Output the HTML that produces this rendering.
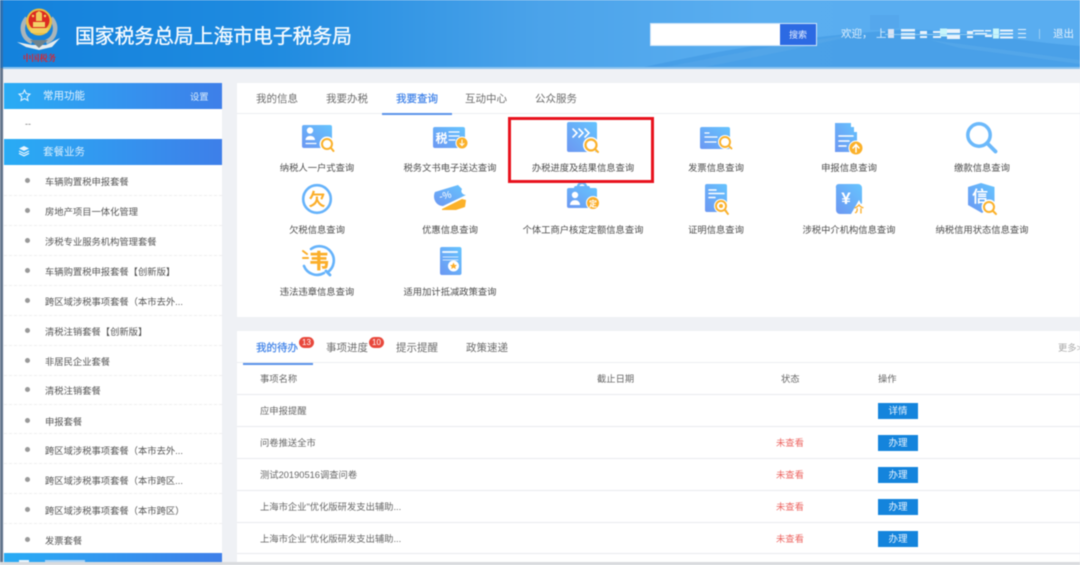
<!DOCTYPE html>
<html lang="zh"><head><meta charset="utf-8"><title>国家税务总局上海市电子税务局</title>
<style>
*{margin:0;padding:0;box-sizing:border-box}
html,body{width:1080px;height:565px;overflow:hidden;background:#eff1f5}
body{position:relative;font-family:"Liberation Sans","Noto Sans CJK SC",sans-serif;color:#666}
.a,.t{position:absolute}
.t{white-space:nowrap;line-height:14px;margin-top:1px}
.lbl{font-size:9.3px;color:#4c4c4c;transform:translateX(-50%);text-align:center;margin-top:0}
.side{font-size:9.3px;color:#555;left:45px}
.dot{position:absolute;left:25px;width:5px;height:5px;border-radius:50%;background:#999}
.sl{position:absolute;left:4px;width:218px;height:1px;border-top:1px dashed #eee}
.sh{position:absolute;left:4px;width:218px;height:26px;background:linear-gradient(90deg,#29acf5,#3e7fe9)}
.tab{font-size:10.5px;color:#6c6c6c;top:91px}
.tab2{font-size:10.5px;color:#6c6c6c;top:340px}
.rl{position:absolute;left:237px;width:843px;height:1px;background:#e9ebee}
.c{font-size:9.3px;color:#666;left:260px;margin-top:0}
.st{font-size:9.3px;color:#ec6460;left:776px;margin-top:0}
.btn{position:absolute;left:878px;width:40px;height:16px;background:#1484dc;color:#e8f4ff;font-size:9.5px;line-height:17px;text-align:center}
.bd{position:absolute;width:15px;height:11px;border-radius:6px;background:#e8483c;color:#fff;font-size:8px;line-height:11px;text-align:center}
svg{position:absolute;overflow:visible}
#wrap{position:absolute;inset:0;filter:blur(.4px)}
</style></head><body><div id="wrap">

<!-- header -->
<div class="a" style="left:0;top:0;width:1080px;height:68px;background:linear-gradient(90deg,#1482dc 0%,#1f8be0 25%,#4ba3ea 50%,#5aaef0 70%,#59adf0 100%)"></div>
<svg style="left:0;top:0" width="1080" height="68" viewBox="0 0 1080 68">
<path d="M640 68C720 50 800 36 900 30C960 28 1020 42 1080 46V68Z" fill="#3f97e3" opacity=".6"/>
<path d="M870 30V15H899V28L890 30Z" fill="#4f9fe6" opacity=".45"/>
<path d="M660 68L780 45L870 32L790 50L700 68Z" fill="#8fc6f2" opacity=".12"/>
<path d="M930 40L1080 60V64L960 48Z" fill="#8fc6f2" opacity=".15"/>
</svg>
<div class="a" style="left:0;top:67px;width:1080px;height:2px;background:#8cc3ef"></div>

<!-- logo -->
<svg style="left:0;top:0" width="70" height="68" viewBox="0 0 70 68">
<path d="M27 18C20 26 22 38 32 42M51 18C58 26 56 38 46 42" fill="none" stroke="#aab5ba" stroke-width="4.500"/>
<path d="M17 42L32 45H46L60 38L52 47L39 50L26 47Z" fill="#e6ecee"/>
<path d="M30 40H48L39 48Z" fill="#6f828c"/>
<ellipse cx="39" cy="22" rx="13" ry="13.500" fill="#e9bd42"/>
<ellipse cx="39" cy="20.500" rx="10.500" ry="10" fill="#dc2a22"/>
<path d="M29 28H49L47 33H31Z" fill="#f2cf5f"/>
<path d="M33 22H45V27H33Z" fill="#f4d268"/>
<path d="M36 13L39 11L42 13V21H36Z" fill="#f0c95a"/>
<circle cx="33" cy="16" r="1.200" fill="#f8d560"/><circle cx="45" cy="16" r="1.200" fill="#f8d560"/>
<text x="39.500" y="61" text-anchor="middle" font-size="8.300" fill="#e0222a" font-family="'Noto Serif CJK SC',serif" font-weight="700">中国税务</text>
</svg>
<div class="t" style="left:75px;top:24px;font-size:19.800px;line-height:24px;color:#f6fbff;-webkit-text-stroke:.35px #f6fbff">国家税务总局上海市电子税务局</div>

<!-- search -->
<div class="a" style="left:650px;top:23px;width:167px;height:23px;background:#fff;border:1px solid #cfe4f8"></div>
<div class="a" style="left:780px;top:24px;width:36px;height:21px;background:#2c6ae3;color:#e6efff;font-size:9px;line-height:23px;text-align:center">搜索</div>
<div class="t" style="left:841px;top:26px;font-size:10.500px;color:#dceefd">欢迎，</div>
<div class="t" style="left:876px;top:26px;font-size:10.500px;color:#dceefd">上</div>
<svg style="left:0;top:0" width="1080" height="68" viewBox="0 0 1080 68">
<g fill="#e9f3fc">
<rect x="888" y="29" width="6" height="9" fill="#d9e3f3"/>
<rect x="901" y="29" width="14" height="2.500"/><rect x="901" y="33" width="14" height="2.500"/><rect x="901" y="36.500" width="14" height="2.500"/>
<rect x="920" y="31" width="7" height="3"/><rect x="920" y="36" width="7" height="2"/>
<rect x="933" y="31" width="8" height="2"/><rect x="933" y="36" width="8" height="2"/>
<rect x="940" y="28.500" width="7" height="8" fill="#c6f5fa"/><rect x="947" y="29" width="13" height="4"/><rect x="947" y="35" width="13" height="4"/>
<rect x="967" y="31" width="6" height="3"/><rect x="967" y="36" width="6" height="2"/>
<rect x="973" y="30" width="11" height="1.500"/><rect x="975" y="33" width="12" height="1.500"/>
<rect x="985" y="30" width="6" height="1.500"/><rect x="985" y="35" width="7" height="2"/>
<rect x="993" y="28.500" width="6" height="10" fill="#c6f5fa"/>
<rect x="1000" y="29.500" width="13" height="2"/><rect x="1000" y="33" width="13" height="1.500"/><rect x="1000" y="36.500" width="13" height="2"/>
<rect x="1018" y="29" width="8" height="1"/><rect x="1018" y="33" width="8" height="1"/><rect x="1018" y="37" width="8" height="1"/>
</g>
<rect x="885" y="34" width="125" height="1" fill="#a9daf8" opacity=".7"/>
</svg>
<div class="a" style="left:1039px;top:29px;width:1px;height:10px;background:#9ccdf3"></div>
<div class="t" style="left:1053px;top:26px;font-size:10.500px;color:#e3f1fd">退出</div>

<!-- left strip -->
<div class="a" style="left:0;top:0;width:3px;height:565px;background:#62758c"></div>
<div class="a" style="left:0;top:0;width:3px;height:68px;background:#2f6fae"></div>

<!-- sidebar -->
<div class="a" style="left:4px;top:83px;width:218px;height:482px;background:#fff"></div>
<div class="sh" style="top:83px"></div>
<svg style="left:18px;top:89px" width="13" height="13" viewBox="0 0 13 13"><path d="M6.500 1L8.200 4.600L12 5.100L9.200 7.700L10 11.500L6.500 9.600L3 11.500L3.800 7.700L1 5.100L4.800 4.600Z" fill="none" stroke="#e8f5fe" stroke-width="1"/></svg>
<div class="t" style="left:43px;top:88px;font-size:10.500px;color:#e0f1fd">常用功能</div>
<div class="t" style="left:190px;top:89px;font-size:9.300px;color:#dceefc">设置</div>
<div class="t" style="left:25px;top:116px;font-size:9px;color:#777">--</div>
<div class="sh" style="top:139px"></div>
<svg style="left:18px;top:145px" width="12" height="12" viewBox="0 0 12 12"><path d="M6 1L11 3.500L6 6L1 3.500Z" fill="#e8f5fe"/><path d="M1 6L6 8.500L11 6M1 8.300L6 10.800L11 8.300" fill="none" stroke="#e8f5fe" stroke-width="1.200"/></svg>
<div class="t" style="left:43px;top:144px;font-size:10.500px;color:#dceffc">套餐业务</div>

<span class="dot" style="top:178px"></span><div class="t side" style="top:174px">车辆购置税申报套餐</div><div class="sl" style="top:195px"></div>
<span class="dot" style="top:208px"></span><div class="t side" style="top:204px">房地产项目一体化管理</div><div class="sl" style="top:225px"></div>
<span class="dot" style="top:238px"></span><div class="t side" style="top:234px">涉税专业服务机构管理套餐</div><div class="sl" style="top:255px"></div>
<span class="dot" style="top:268px"></span><div class="t side" style="top:264px">车辆购置税申报套餐【创新版】</div><div class="sl" style="top:285px"></div>
<span class="dot" style="top:298px"></span><div class="t side" style="top:294px">跨区域涉税事项套餐（本市去外...</div><div class="sl" style="top:315px"></div>
<span class="dot" style="top:328px"></span><div class="t side" style="top:324px">清税注销套餐【创新版】</div><div class="sl" style="top:345px"></div>
<span class="dot" style="top:358px"></span><div class="t side" style="top:354px">非居民企业套餐</div><div class="sl" style="top:375px"></div>
<span class="dot" style="top:387px"></span><div class="t side" style="top:383px">清税注销套餐</div><div class="sl" style="top:404px"></div>
<span class="dot" style="top:418px"></span><div class="t side" style="top:414px">申报套餐</div><div class="sl" style="top:433px"></div>
<span class="dot" style="top:447px"></span><div class="t side" style="top:443px">跨区域涉税事项套餐（本市去外...</div><div class="sl" style="top:463px"></div>
<span class="dot" style="top:477px"></span><div class="t side" style="top:473px">跨区域涉税事项套餐（本市跨区...</div><div class="sl" style="top:493px"></div>
<span class="dot" style="top:507px"></span><div class="t side" style="top:503px">跨区域涉税事项套餐（本市跨区）</div><div class="sl" style="top:523px"></div>
<span class="dot" style="top:537px"></span><div class="t side" style="top:533px">发票套餐</div>
<div class="sh" style="top:553px;height:12px"></div>
<div class="a" style="left:19px;top:560px;width:10px;height:2px;background:#e8f5fe"></div>
<div class="a" style="left:45px;top:560px;width:40px;height:2px;background:#a9d3f6"></div>

<!-- main panel 1 -->
<div class="a" style="left:237px;top:83px;width:843px;height:234px;background:#fff"></div>
<div class="a" style="left:237px;top:113px;width:843px;height:1px;background:#eceef1"></div>
<div class="a" style="left:382px;top:113px;width:70px;height:2px;background:#5b93ea"></div>
<div class="t tab" style="left:256px">我的信息</div>
<div class="t tab" style="left:326px">我要办税</div>
<div class="t tab" style="left:396px;color:#3f82e8;-webkit-text-stroke:.2px #3f82e8">我要查询</div>
<div class="t tab" style="left:465px">互动中心</div>
<div class="t tab" style="left:535px">公众服务</div>

<svg style="left:0;top:0" width="1080" height="565" viewBox="0 0 1080 565">
<defs>
<linearGradient id="g" x1="1" y1="0" x2="0" y2="1"><stop offset="0" stop-color="#66c4fe"/><stop offset="1" stop-color="#6c97f2"/></linearGradient>
</defs>
<g fill="none" stroke-linecap="round">
<!-- 1 taxpayer -->
<rect x="302" y="125" width="30" height="23" rx="2" fill="url(#g)"/>
<circle cx="310" cy="130.500" r="3.200" fill="#fff"/><path d="M305.500 140C305.500 134.500 315 134.500 315 140Z" fill="#fff"/>
<path d="M306 143.500H316" stroke="#fff" stroke-width="1.200"/>
<circle cx="327" cy="144" r="7.500" fill="#fff"/><circle cx="327" cy="144" r="5" stroke="#fbb12a" stroke-width="2"/><path d="M331 148L333.500 151" stroke="#fbb12a" stroke-width="2"/>
<!-- 2 tax doc -->
<rect x="433" y="127" width="32" height="21" rx="2" fill="url(#g)"/>
<text x="435.500" y="142.500" font-size="12" font-weight="700" fill="#fff" stroke="none">税</text>
<path d="M449 132H459M449 136H459M449 140H455" stroke="#fff" stroke-width="1.200"/>
<circle cx="462" cy="143" r="6" fill="#fbb12a" stroke="#fff"/><path d="M462 140V145M460 143.500L462 145.500L464 143.500" stroke="#fff"/>
<!-- 3 progress -->
<path d="M569 122H595A2 2 0 0 1 597 124V152H569A2 2 0 0 1 567 150V124A2 2 0 0 1 569 122Z" fill="url(#g)"/>
<path d="M573 129L577 133L573 137M579 129L583 133L579 137M585 129L589 133L585 137" stroke="#fff" stroke-width="1.600"/>
<circle cx="591" cy="145" r="8" fill="#fff"/><circle cx="591" cy="145" r="5.500" stroke="#fbb12a" stroke-width="2.200"/><path d="M595 149L598 152" stroke="#fbb12a" stroke-width="2"/>
<!-- 4 invoice -->
<rect x="700" y="127" width="30" height="22" rx="2" fill="url(#g)"/>
<path d="M705 133H709M705 137H717M705 142H716" stroke="#fff" stroke-width="1.300"/>
<circle cx="725" cy="142" r="7" fill="#fff"/><circle cx="725" cy="142" r="5" stroke="#fbb12a" stroke-width="1.900"/><path d="M729 146L731.500 148.500" stroke="#fbb12a" stroke-width="1.900"/>
<!-- 5 declare -->
<path d="M835 123H851V127H854V132H857V152H835Z" fill="url(#g)"/>
<path d="M839 136H853M839 141H849M839 146H846" stroke="#fff" stroke-width="1.600"/>
<circle cx="856" cy="148" r="7" fill="#fbb12a" stroke="#fff"/><path d="M856 152V145M853 148L856 144.500L859 148" stroke="#fff" stroke-width="1.500"/>
<!-- 6 payment -->
<circle cx="979" cy="135" r="11.200" stroke="#6cb9fb" stroke-width="3.500"/><path d="M988 144L995.500 151.500" stroke="#6cb9fb" stroke-width="3.800"/>
<!-- 7 owed -->
<circle cx="317" cy="199" r="13.800" stroke="#66b3fb" stroke-width="2.600"/>
<text x="317" y="205.500" text-anchor="middle" font-size="17" font-weight="700" fill="#fbae2a" stroke="none">欠</text>
<!-- 8 coupon -->
<path d="M435 192L458 185L462 189C460 192 463 195 466 195L443 206C436 206 432 198 435 192Z" fill="url(#g)"/>
<text x="440" y="200" font-size="10" fill="#fff" stroke="none" transform="rotate(-12 440 200)">-%</text>
<path d="M442 209L462 199L466 200L465 207L456 210H442Z" fill="#fbb12a"/>
<!-- 9 self-employed -->
<path d="M578 187A4 4 0 0 1 586 187" stroke="#6cb9fb" stroke-width="2.500"/>
<rect x="567" y="188" width="30" height="20" rx="2" fill="url(#g)"/>
<rect x="574" y="186" width="16" height="4" rx="2" fill="#66b5fb"/>
<circle cx="575" cy="195" r="3.200" fill="#fff"/><path d="M570 205C570 198.500 580 198.500 580 205Z" fill="#fff"/>
<circle cx="593" cy="203" r="6.500" fill="#fbae2a" stroke="#fff"/>
<text x="593" y="206.500" text-anchor="middle" font-size="8" font-weight="700" fill="#fff" stroke="none">定</text>
<!-- 10 certify -->
<rect x="705" y="184" width="22" height="28" rx="2" fill="url(#g)"/>
<path d="M709 190H716M709 193.500H724M709 197.500H715" stroke="#fff" stroke-width="1.500"/>
<circle cx="721" cy="206" r="7" fill="#fff"/><circle cx="721" cy="206" r="5" stroke="#fbb12a" stroke-width="1.900"/><circle cx="721" cy="206" r="2" fill="#fbb12a"/><path d="M725 210L728 214" stroke="#fbb12a" stroke-width="1.900"/>
<!-- 11 agency -->
<path d="M839 184H858A4 4 0 0 1 862 188V203L853 214H840A4 4 0 0 1 836 210V188A3 3 0 0 1 839 184Z" fill="url(#g)"/>
<text x="846" y="204" text-anchor="middle" font-size="17" fill="#fff" stroke="none" font-weight="700">¥</text>
<path d="M851 214L859 200L866 214Z" fill="#fff"/>
<text x="859" y="213" text-anchor="middle" font-size="10" font-weight="700" fill="#fbae2a" stroke="none">介</text>
<!-- 12 credit -->
<path d="M981 183L994.500 187V203L982 213L968 205V187Z" fill="url(#g)"/>
<text x="980" y="202" text-anchor="middle" font-size="16" font-weight="700" fill="#fff" stroke="none">信</text>
<circle cx="989" cy="207" r="7.500" fill="#fff"/><circle cx="989" cy="207" r="5" stroke="#fbb12a" stroke-width="2"/><path d="M993 211L996 214" stroke="#fbb12a" stroke-width="2"/>
<!-- 13 violation -->
<path d="M311 249A14 14 0 0 1 328 272M304 266A14 14 0 0 0 324 273" stroke="#66b3fb" stroke-width="2.600"/>
<path d="M326 271L330 275" stroke="#66b3fb" stroke-width="2.800"/>
<text x="319" y="268" text-anchor="middle" font-size="20" fill="#fbae2a" stroke="#fbae2a" stroke-width=".5" font-weight="700">韦</text>
<path d="M303 251L307 254M303 258H308" stroke="#fbae2a" stroke-width="2"/>
<!-- 14 policy -->
<rect x="440" y="247" width="21.500" height="28" rx="2" fill="url(#g)"/>
<path d="M443 252H457" stroke="#e9f5ff" stroke-width="2"/><path d="M443 257H458M443 260H458" stroke="#cfe6fd" stroke-width=".9"/>
<circle cx="453.500" cy="266" r="5.500" fill="#fff"/><path d="M453.500 262.500L454.700 265H457L455.200 266.800L455.900 269L453.500 267.800L451.100 269L451.800 266.800L450 265H452.300Z" fill="#fbae2a"/>
</g>
</svg>

<div class="t lbl" style="left:317px;top:161px">纳税人一户式查询</div>
<div class="t lbl" style="left:450px;top:161px">税务文书电子送达查询</div>
<div class="t lbl" style="left:583px;top:161px">办税进度及结果信息查询</div>
<div class="t lbl" style="left:716px;top:161px">发票信息查询</div>
<div class="t lbl" style="left:849px;top:161px">申报信息查询</div>
<div class="t lbl" style="left:982px;top:161px">缴款信息查询</div>
<div class="t lbl" style="left:317px;top:223px">欠税信息查询</div>
<div class="t lbl" style="left:450px;top:223px">优惠信息查询</div>
<div class="t lbl" style="left:583px;top:223px">个体工商户核定定额信息查询</div>
<div class="t lbl" style="left:716px;top:223px">证明信息查询</div>
<div class="t lbl" style="left:849px;top:223px">涉税中介机构信息查询</div>
<div class="t lbl" style="left:982px;top:223px">纳税信用状态信息查询</div>
<div class="t lbl" style="left:317px;top:285px">违法违章信息查询</div>
<div class="t lbl" style="left:450px;top:285px">适用加计抵减政策查询</div>

<!-- red box -->
<div class="a" style="left:508px;top:117px;width:146px;height:66px;border:3px solid #e8121e"></div>

<!-- panel 2 -->
<div class="a" style="left:237px;top:331px;width:843px;height:231px;background:#fff"></div>
<div class="a" style="left:237px;top:362px;width:843px;height:1px;background:#eceef1"></div>
<div class="a" style="left:243px;top:363px;width:70px;height:2px;background:#5b93ea"></div>
<div class="t tab2" style="left:256px;color:#3f82e8;-webkit-text-stroke:.2px #3f82e8">我的待办</div>
<div class="bd" style="left:299px;top:337px">13</div>
<div class="t tab2" style="left:326px">事项进度</div>
<div class="bd" style="left:369px;top:337px">10</div>
<div class="t tab2" style="left:396px">提示提醒</div>
<div class="t tab2" style="left:466px">政策速递</div>
<div class="t" style="left:1058px;top:340px;font-size:9.300px;color:#aaa">更多&gt;</div>

<div class="t c" style="top:372px">事项名称</div>
<div class="t c" style="left:597px;top:372px">截止日期</div>
<div class="t c" style="left:781px;top:372px">状态</div>
<div class="t c" style="left:878px;top:372px">操作</div>
<div class="rl" style="top:394px"></div>
<div class="t c" style="top:404px">应申报提醒</div>
<div class="btn" style="top:403px">详情</div>
<div class="rl" style="top:426px"></div>
<div class="t c" style="top:436px">问卷推送全市</div>
<div class="t st" style="top:436px">未查看</div>
<div class="btn" style="top:435px">办理</div>
<div class="rl" style="top:458px"></div>
<div class="t c" style="top:468px">测试20190516调查问卷</div>
<div class="t st" style="top:468px">未查看</div>
<div class="btn" style="top:467px">办理</div>
<div class="rl" style="top:490px"></div>
<div class="t c" style="top:500px">上海市企业"优化版研发支出辅助...</div>
<div class="t st" style="top:500px">未查看</div>
<div class="btn" style="top:499px">办理</div>
<div class="rl" style="top:522px"></div>
<div class="t c" style="top:532px">上海市企业"优化版研发支出辅助...</div>
<div class="t st" style="top:532px">未查看</div>
<div class="btn" style="top:531px">办理</div>
<div class="rl" style="top:553px"></div>

<!-- bottom strip -->
<div class="a" style="left:0;top:562px;width:1080px;height:3px;background:#d9dbde"></div>
</div></body></html>
